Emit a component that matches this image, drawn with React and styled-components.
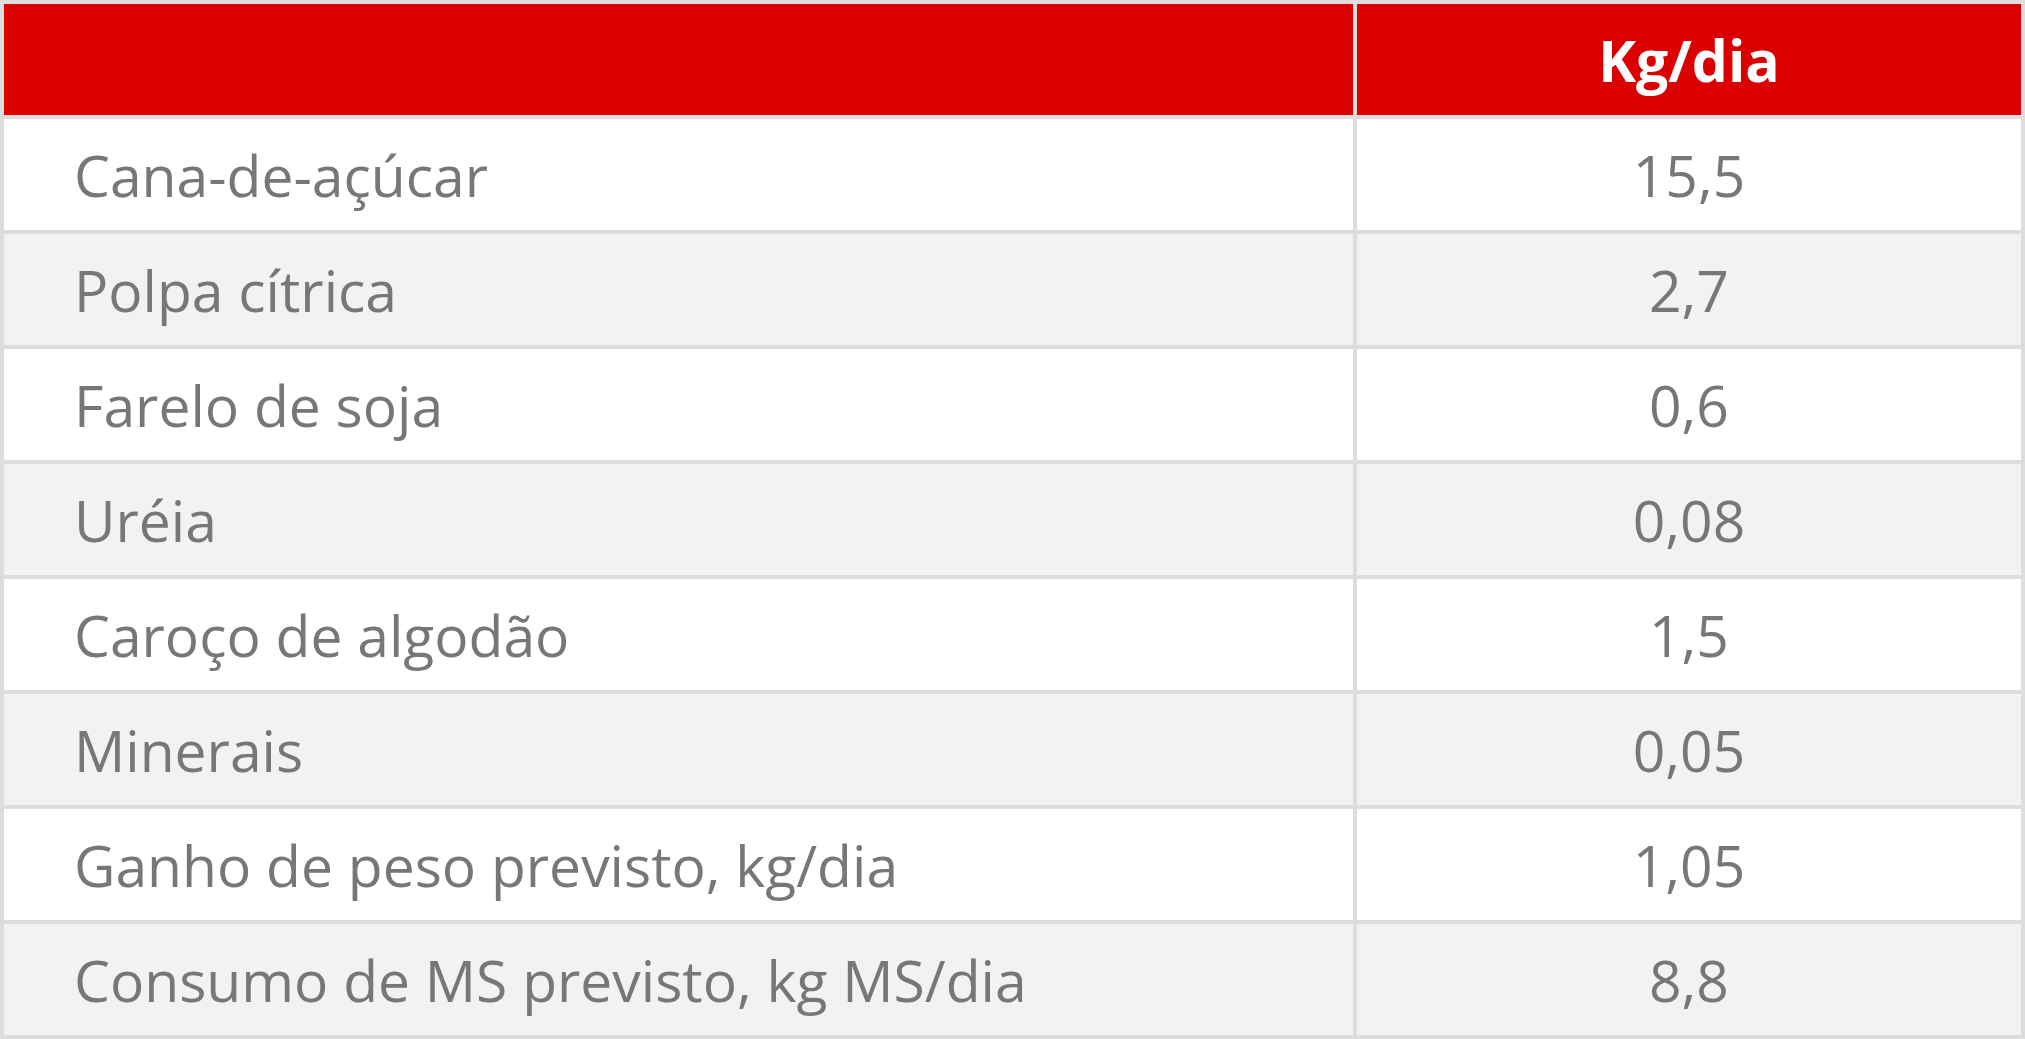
import React from "react";
import styled, { createGlobalStyle } from "styled-components";

const GlobalStyle = createGlobalStyle`
  html, body {
    margin: 0;
    padding: 0;
    background: #ffffff;
  }
  body {
    font-family: "Open Sans", "Noto Sans", sans-serif;
  }
`;

const Table = styled.table`
  width: 2025px;
  border-collapse: collapse;
  table-layout: fixed;
  border: 4px solid #dddddd;
  font-family: "Open Sans", "Noto Sans", sans-serif;
`;

const HeadCell = styled.th`
  height: 111px;
  padding: 0;
  background: #db0000;
  border: 4px solid #dddddd;
  color: #ffffff;
  font-size: 57px;
  font-weight: 700;
  text-align: center;
  vertical-align: middle;
`;

const Row = styled.tr`
  background: ${({ $striped }) => ($striped ? "#f2f2f2" : "#ffffff")};
`;

const Cell = styled.td`
  height: 111px;
  padding: 0 0 0 ${({ $center }) => ($center ? "0" : "70px")};
  border: 4px solid #dddddd;
  color: #777777;
  font-size: 57px;
  font-weight: 400;
  text-align: ${({ $center }) => ($center ? "center" : "left")};
  vertical-align: middle;
  white-space: nowrap;
`;

const rows = [
  ["Cana-de-açúcar", "15,5"],
  ["Polpa cítrica", "2,7"],
  ["Farelo de soja", "0,6"],
  ["Uréia", "0,08"],
  ["Caroço de algodão", "1,5"],
  ["Minerais", "0,05"],
  ["Ganho de peso previsto, kg/dia", "1,05"],
  ["Consumo de MS previsto, kg MS/dia", "8,8"],
];

export default function App() {
  return (
    <>
      <GlobalStyle />
      <Table>
        <colgroup>
          <col style={{ width: 1353 }} />
          <col />
        </colgroup>
        <thead>
          <tr>
            <HeadCell></HeadCell>
            <HeadCell>Kg/dia</HeadCell>
          </tr>
        </thead>
        <tbody>
          {rows.map(([name, value], i) => (
            <Row key={name} $striped={i % 2 === 1}>
              <Cell>{name}</Cell>
              <Cell $center>{value}</Cell>
            </Row>
          ))}
        </tbody>
      </Table>
    </>
  );
}
